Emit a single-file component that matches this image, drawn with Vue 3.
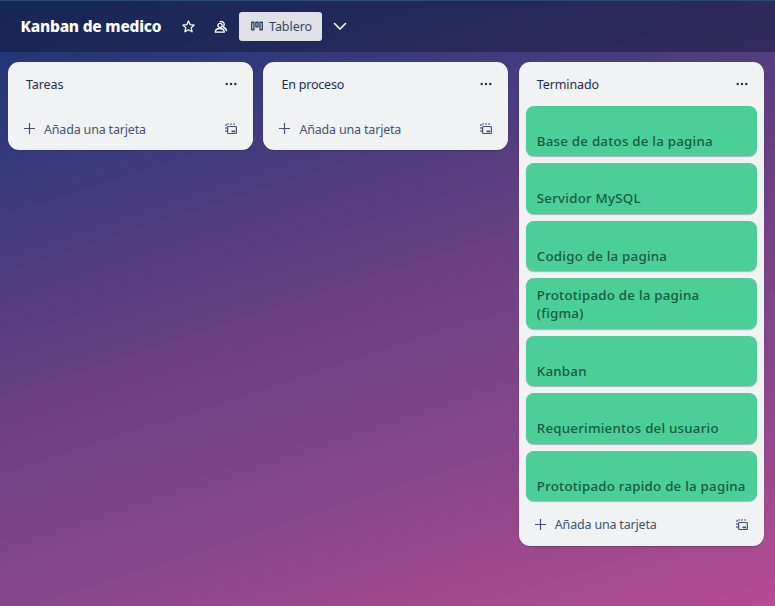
<script setup>
const lists = [
  { title: 'Tareas', kind: 'tareas', cards: [] },
  { title: 'En proceso', kind: 'proceso', cards: [] },
  {
    title: 'Terminado',
    kind: 'terminado',
    cards: [
      'Base de datos de la pagina',
      'Servidor MySQL',
      'Codigo de la pagina',
      'Prototipado de la pagina (figma)',
      'Kanban',
      'Requerimientos del usuario',
      'Prototipado rapido de la pagina',
    ],
  },
]
</script>

<template>
  <div class="board">
    <header class="bar">
      <h1 class="name">Kanban de medico</h1>
      <svg class="star" width="14" height="14" viewBox="0 0 14 14">
        <path d="M6.500 1 8.200 4.700l4 .4-3 2.700.9 4L6.500 9.800l-3.600 2 .9-4-3-2.700 4-.4Z" />
      </svg>
      <svg class="people" width="14" height="14" viewBox="0 0 14 14">
        <circle cx="6" cy="5.400" r="2.100" />
        <path d="M1.300 12.200c0-2.500 1.800-3.700 4.500-3.700s4.500 1.200 4.500 3.700Z" />
        <path d="M5.700 2.100C7.500.7 10.500 1.900 10.200 4.600c0 1-.4 1.600-1 2.200 1.900.9 3.200 2.100 3.400 4.400" />
      </svg>
      <button class="view">
        <svg width="12" height="11" viewBox="0 0 12 11">
          <path d="M.7 1.200h2.300v7.600H.7ZM4.900 1.200h2.200v4.600H4.900ZM9 1.200h2.300v7.600H9Z" />
        </svg>
        <span>Tablero</span>
      </button>
      <svg class="chevron" width="14" height="9" viewBox="0 0 14 9">
        <path d="m1.500 1.500 5.500 5.500 5.500-5.500" />
      </svg>
    </header>
    <main class="lists">
      <section v-for="list in lists" :key="list.title" class="list" :class="list.kind">
        <div class="head">
          <h2>{{ list.title }}</h2>
          <svg class="dots" width="12" height="4" viewBox="0 0 12 4">
            <circle cx="1.700" cy="2" r="1.200" />
            <circle cx="6" cy="2" r="1.200" />
            <circle cx="10.300" cy="2" r="1.200" />
          </svg>
        </div>
        <div v-if="list.cards.length" class="cards">
          <article v-for="card in list.cards" :key="card" class="card">
            <span>{{ card }}</span>
          </article>
        </div>
        <div class="foot">
          <svg class="plus" width="12" height="12" viewBox="0 0 12 12">
            <path d="M0 5.500h11M5.500 0v11" />
          </svg>
          <span class="add">Añada una tarjeta</span>
          <svg class="template" width="12" height="12" viewBox="0 0 12 12">
            <path class="dash" d="M1 9V1h9.500" />
            <rect x="2.600" y="3.500" width="8.800" height="7" rx=".8" />
            <path class="fill" d="M6.500 7.500h3.700v1.800H6.500Z" />
          </svg>
        </div>
      </section>
    </main>
  </div>
</template>

<style>
body {
  margin: 0;
}
</style>

<style scoped>
.board {
  height: 606px;
  overflow: hidden;
  display: flex;
  flex-direction: column;
  font-family: 'Noto Sans', sans-serif;
  font-size: 12.5px;
  background: linear-gradient(162deg, #1b3571 0%, #33397b 17.5%, #6a4083 48%, #86468b 70.6%, #a54a8f 90%, #b54b93 100%);
}
.bar {
  height: 52px;
  box-sizing: border-box;
  flex: none;
  display: flex;
  align-items: center;
  padding-left: 20.500px;
  border-top: 1px solid #2b4a73;
  background: rgba(16, 24, 54, 0.47);
}
.name {
  width: 161px;
  margin: 0;
  padding-bottom: 1px;
  font-size: 15.500px;
  line-height: 24px;
  font-weight: 800;
  color: #fff;
  letter-spacing: -0.22px;
  white-space: nowrap;
}
.bar svg {
  flex: none;
  fill: none;
  stroke: #fff;
  stroke-width: 1.300;
  stroke-linejoin: round;
}
.people {
  margin-left: 18.500px;
}
.view {
  width: 83px;
  height: 29px;
  margin-left: 11px;
  padding: 0 0 0 12px;
  display: flex;
  align-items: center;
  gap: 6px;
  border: 0;
  border-radius: 3px;
  background: #dfe1e7;
  color: #344866;
  font: inherit;
  letter-spacing: -0.05px;
}
.bar .view svg {
  stroke: #344866;
  stroke-width: 1.400;
}
.bar .chevron {
  margin-left: 11px;
  stroke-width: 1.600;
  stroke-linecap: round;
}
.lists {
  display: flex;
  align-items: flex-start;
  gap: 10.400px;
  padding: 10px 0 0 8px;
}
.list {
  width: 245px;
  flex: none;
  border-radius: 11px;
  background: #f1f2f4;
  box-shadow: 0 1px 1px rgba(9, 30, 66, 0.3);
}
.head {
  height: 44px;
  box-sizing: border-box;
  display: flex;
  align-items: center;
  justify-content: space-between;
  padding: 0 16px 0 18px;
}
h2 {
  margin: 0;
  font-size: 12.500px;
  font-weight: 400;
  color: #1c2e50;
  letter-spacing: -0.2px;
}
.tareas h2,
.terminado h2 {
  letter-spacing: -0.1px;
}
.dots {
  fill: #1c2e50;
}
.cards {
  display: flex;
  flex-direction: column;
  gap: 7px;
  margin-top: -0.300px;
  padding: 0 7px;
}
.card {
  height: 50.500px;
  box-sizing: border-box;
  display: flex;
  align-items: flex-end;
  padding: 0 10px 6.400px 11px;
  border-radius: 8px;
  background: #4bce97;
  box-shadow: 0 1px 1px rgba(9, 30, 66, 0.3);
  color: #195a42;
  font-size: 13.300px;
  font-weight: 500;
  line-height: 18px;
  letter-spacing: 0.24px;
}
.foot {
  height: 44px;
  box-sizing: border-box;
  display: flex;
  align-items: center;
  padding: 2px 16px 0 16px;
  color: #44546f;
}
.terminado .foot {
  height: 44.800px;
}
.foot svg {
  flex: none;
  fill: none;
  stroke: #44546f;
  stroke-width: 1.200;
}
.add {
  flex: 1;
  margin-left: 8px;
  letter-spacing: -0.18px;
}
.foot .dash {
  stroke-dasharray: 2 1;
}
.foot .fill {
  fill: #44546f;
  stroke: none;
}
</style>
